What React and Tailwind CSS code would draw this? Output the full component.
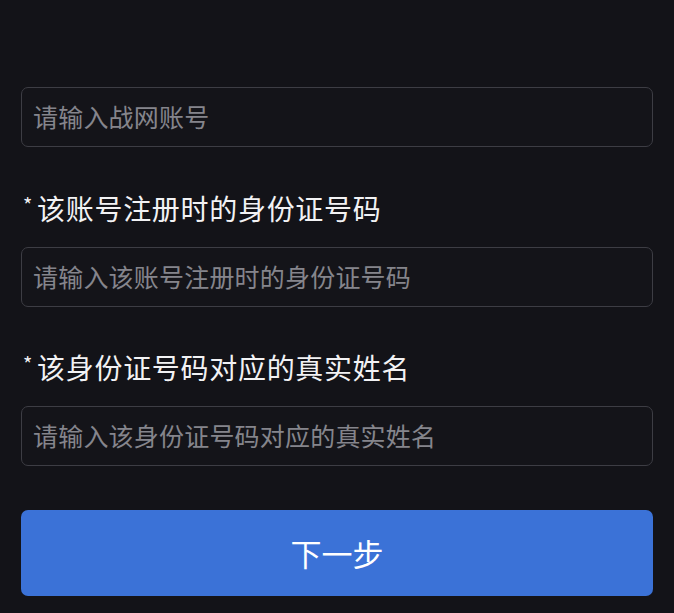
import { useState } from 'react'

const FONT = { fontFamily: '"Noto Sans CJK SC", "Noto Sans", sans-serif' }

function Field({ label, placeholder, value, onChange }) {
  return (
    <>
      {label && (
        <div className="flex items-start h-[40px] mt-[41px] mb-[19px] text-[28px] leading-[40px] tracking-[0.7px] text-[#f2f2f4]">
          <span className="text-[20px] leading-[30px] mt-[2px] ml-[2px] mr-[4px]">*</span>
          <span>{label}</span>
        </div>
      )}
      <input
        value={value}
        onChange={e => onChange(e.target.value)}
        placeholder={placeholder}
        style={FONT}
        className="block w-full h-[60px] rounded-[7px] border border-[#3d3d44] bg-[#141419] pl-[11px] pb-[2px] text-[25px] tracking-[0.2px] text-[#e8e8ea] placeholder:text-[#85858c] focus:outline-none"
      />
    </>
  )
}

export default function App() {
  const [account, setAccount] = useState('')
  const [idNo, setIdNo] = useState('')
  const [name, setName] = useState('')

  return (
    <div style={FONT} className="min-h-screen bg-[#131318] pt-[87px] px-[21px] pb-[16px]">
      <Field placeholder="请输入战网账号" value={account} onChange={setAccount} />
      <Field
        label="该账号注册时的身份证号码"
        placeholder="请输入该账号注册时的身份证号码"
        value={idNo}
        onChange={setIdNo}
      />
      <div className="-mt-px" />
      <Field
        label="该身份证号码对应的真实姓名"
        placeholder="请输入该身份证号码对应的真实姓名"
        value={name}
        onChange={setName}
      />
      <button
        style={FONT}
        className="mt-[44px] w-full h-[86px] rounded-[7px] bg-[#3b72d7] text-[31px] text-white"
      >
        下一步
      </button>
    </div>
  )
}
